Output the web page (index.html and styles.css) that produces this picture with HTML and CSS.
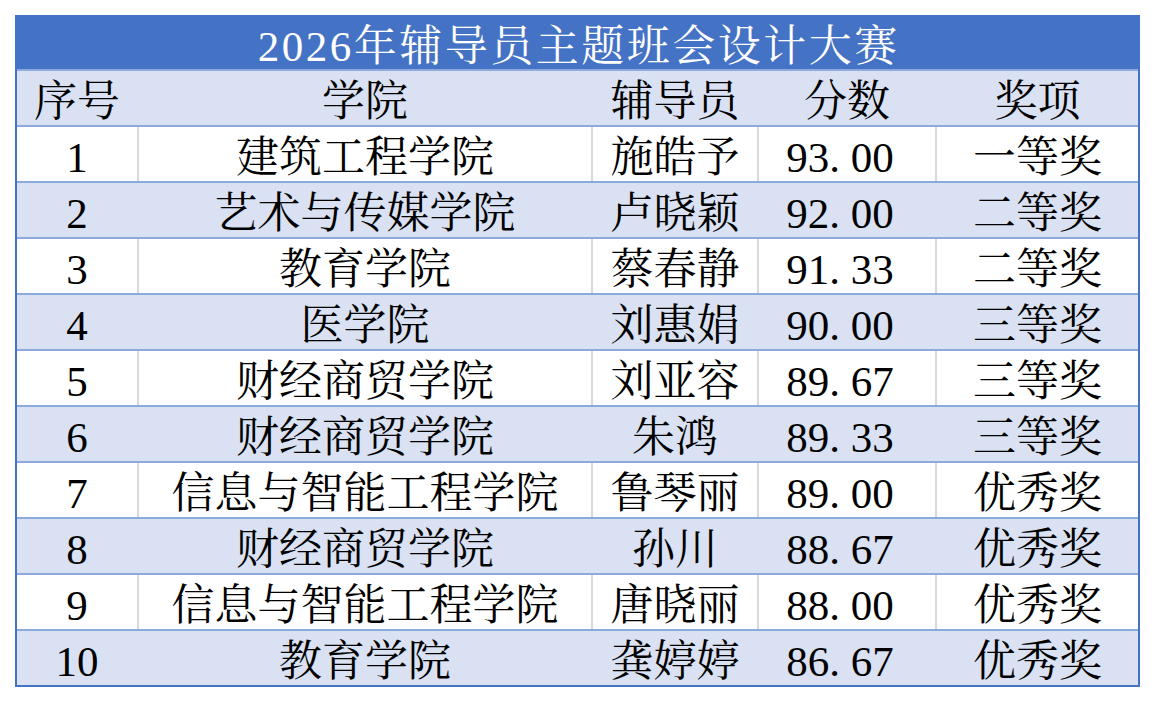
FILE: index.html
```html
<!DOCTYPE html>
<html lang="zh-CN">
<head>
<meta charset="utf-8">
<title>2026年辅导员主题班会设计大赛</title>
<link rel="stylesheet" href="styles.css">
</head>
<body>
<div class="sheet">
  <div class="title"><span class="title-text">2026年辅导员主题班会设计大赛</span></div>
  <div class="row alt head">
    <div class="cell">序号</div><div class="cell">学院</div><div class="cell">辅导员</div><div class="cell">分数</div><div class="cell">奖项</div>
  </div>
  <div class="row">
    <div class="cell">1</div><div class="cell">建筑工程学院</div><div class="cell">施皓予</div><div class="cell score">93<span class="dot">.</span>00</div><div class="cell">一等奖</div>
  </div>
  <div class="row alt">
    <div class="cell">2</div><div class="cell">艺术与传媒学院</div><div class="cell">卢晓颖</div><div class="cell score">92<span class="dot">.</span>00</div><div class="cell">二等奖</div>
  </div>
  <div class="row">
    <div class="cell">3</div><div class="cell">教育学院</div><div class="cell">蔡春静</div><div class="cell score">91<span class="dot">.</span>33</div><div class="cell">二等奖</div>
  </div>
  <div class="row alt">
    <div class="cell">4</div><div class="cell">医学院</div><div class="cell">刘惠娟</div><div class="cell score">90<span class="dot">.</span>00</div><div class="cell">三等奖</div>
  </div>
  <div class="row">
    <div class="cell">5</div><div class="cell">财经商贸学院</div><div class="cell">刘亚容</div><div class="cell score">89<span class="dot">.</span>67</div><div class="cell">三等奖</div>
  </div>
  <div class="row alt">
    <div class="cell">6</div><div class="cell">财经商贸学院</div><div class="cell">朱鸿</div><div class="cell score">89<span class="dot">.</span>33</div><div class="cell">三等奖</div>
  </div>
  <div class="row">
    <div class="cell">7</div><div class="cell">信息与智能工程学院</div><div class="cell">鲁琴丽</div><div class="cell score">89<span class="dot">.</span>00</div><div class="cell">优秀奖</div>
  </div>
  <div class="row alt">
    <div class="cell">8</div><div class="cell">财经商贸学院</div><div class="cell">孙川</div><div class="cell score">88<span class="dot">.</span>67</div><div class="cell">优秀奖</div>
  </div>
  <div class="row">
    <div class="cell">9</div><div class="cell">信息与智能工程学院</div><div class="cell">唐晓丽</div><div class="cell score">88<span class="dot">.</span>00</div><div class="cell">优秀奖</div>
  </div>
  <div class="row alt last">
    <div class="cell">10</div><div class="cell">教育学院</div><div class="cell">龚婷婷</div><div class="cell score">86<span class="dot">.</span>67</div><div class="cell">优秀奖</div>
  </div>
</div>
</body>
</html>
```
FILE: styles.css
```css
html, body {
  margin: 0;
  padding: 0;
  background: #ffffff;
}
body {
  padding: 15px 0 0 15px;
  font-family: "Liberation Serif", "Noto Serif CJK SC", "Noto Sans CJK SC", serif;
  font-size: 43px;
  color: #000000;
}
.sheet {
  width: 1125px;
  box-sizing: border-box;
  border: 2px solid #4472C4;
}
.title {
  height: 54px;
  box-sizing: border-box;
  padding-top: 6px;
  line-height: 48px;
  background: #4472C4;
  color: #ffffff;
  text-align: center;
  border-bottom: 2px solid #8EA9DB;
  white-space: nowrap;
}
.title-text {
  letter-spacing: 2.5px;
  margin-right: -2.5px;
}
.row {
  display: grid;
  grid-template-columns: 120px 454px 166px 178px 203px;
  height: 56px;
  box-sizing: border-box;
  border-bottom: 2px solid #8EA9DB;
  background: #ffffff;
}
.row.last {
  border-bottom: none;
  height: 54px;
}
.row.alt {
  background: #D9E1F2;
}
.cell {
  display: flex;
  align-items: center;
  justify-content: center;
  white-space: nowrap;
  line-height: 46px;
  padding-top: 8px;
  box-sizing: border-box;
  border-left: 2px solid #D9D9D9;
}
.cell:first-child {
  border-left: none;
}
.row.alt .cell {
  border-left-color: transparent;
}
.score {
  padding-right: 14px;
}
.dot {
  display: inline-block;
  width: 0.5em;
  text-align: left;
}
```
